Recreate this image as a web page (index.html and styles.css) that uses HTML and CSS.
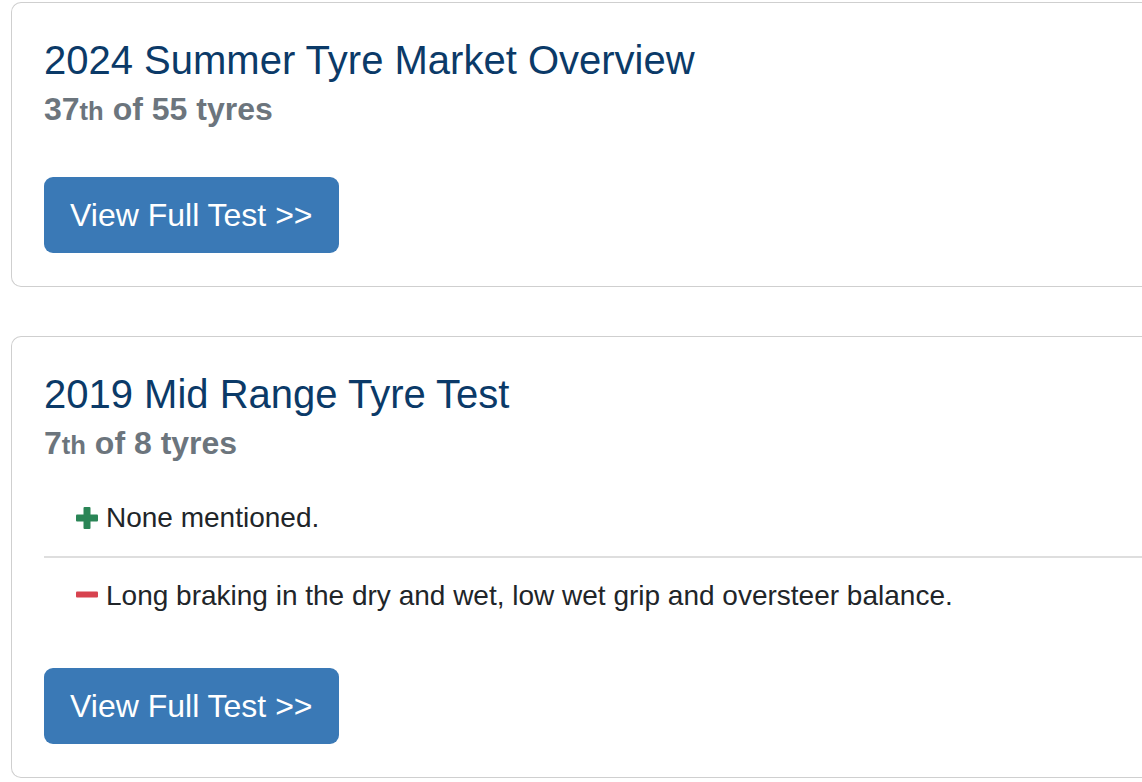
FILE: index.html
```html
<html>
<head>
    <meta charset="UTF-8">
    <meta name="viewport" content="width=device-width, initial-scale=1.0">
    <title>Tyre Test Results</title>
    <link rel="stylesheet" href="styles.css">
</head>
<body>

    <div class="test-card">
        <h3 class="test-title">2024 Summer Tyre Market Overview</h3>
        <div class="test-rank">37<small>th</small> of 55 tyres</div>
        <a class="btn-test" href="#">View Full Test &gt;&gt;</a>
    </div>

    <div class="test-card">
        <h3 class="test-title">2019 Mid Range Tyre Test</h3>
        <div class="test-rank">7<small>th</small> of 8 tyres</div>
        <ul class="test-points">
            <li>
                <svg class="icon" width="22" height="22" viewBox="0 0 22 22"><rect x="0" y="7.5" width="22" height="7" rx="1" fill="#2a8556"/><rect x="7.5" y="0" width="7" height="22" rx="1" fill="#2a8556"/></svg>
                None mentioned.
            </li>
            <li>
                <svg class="icon" width="22" height="22" viewBox="0 0 22 22"><rect x="0" y="6.5" width="22" height="6" rx="1" fill="#d7434f"/></svg>
                Long braking in the dry and wet, low wet grip and oversteer balance.
            </li>
        </ul>
        <a class="btn-test" href="#">View Full Test &gt;&gt;</a>
    </div>

</body>
</html>
```

FILE: styles.css
```css
body { font-family: "Liberation Sans", Arial, sans-serif; background: #fff; margin: 0; padding: 2px 0 0 11px; color: #212529; }
.test-card { border: 1px solid #cfcfcf; border-right: none; border-radius: 10px 0 0 10px; padding: 35px 0 33px 32px; margin-bottom: 49px; }
.test-card:last-child { margin-bottom: 0; }
.test-title { font-size: 40px; line-height: 1.1; font-weight: normal; color: #0b3a68; margin: 0 0 10px 0; }
.test-rank { font-size: 32px; line-height: 1.1; font-weight: bold; color: #6c757d; margin-bottom: 16px; }
.test-rank small { font-size: 80%; }
.test-points { list-style: none; margin: 0; padding: 3px 0 0 0; }
.test-points li { display: flex; align-items: center; gap: 8px; font-size: 28px; line-height: 42px; padding: 17px 32px; }
.test-points li + li { border-top: 2px solid #dedede; }
.icon { flex: none; }
.btn-test { display: inline-block; margin-top: 34px; background-color: #3a79b6; color: #fff; font-size: 32px; line-height: 48px; padding: 14px 26px; border-radius: 9px; text-decoration: none; }
```
